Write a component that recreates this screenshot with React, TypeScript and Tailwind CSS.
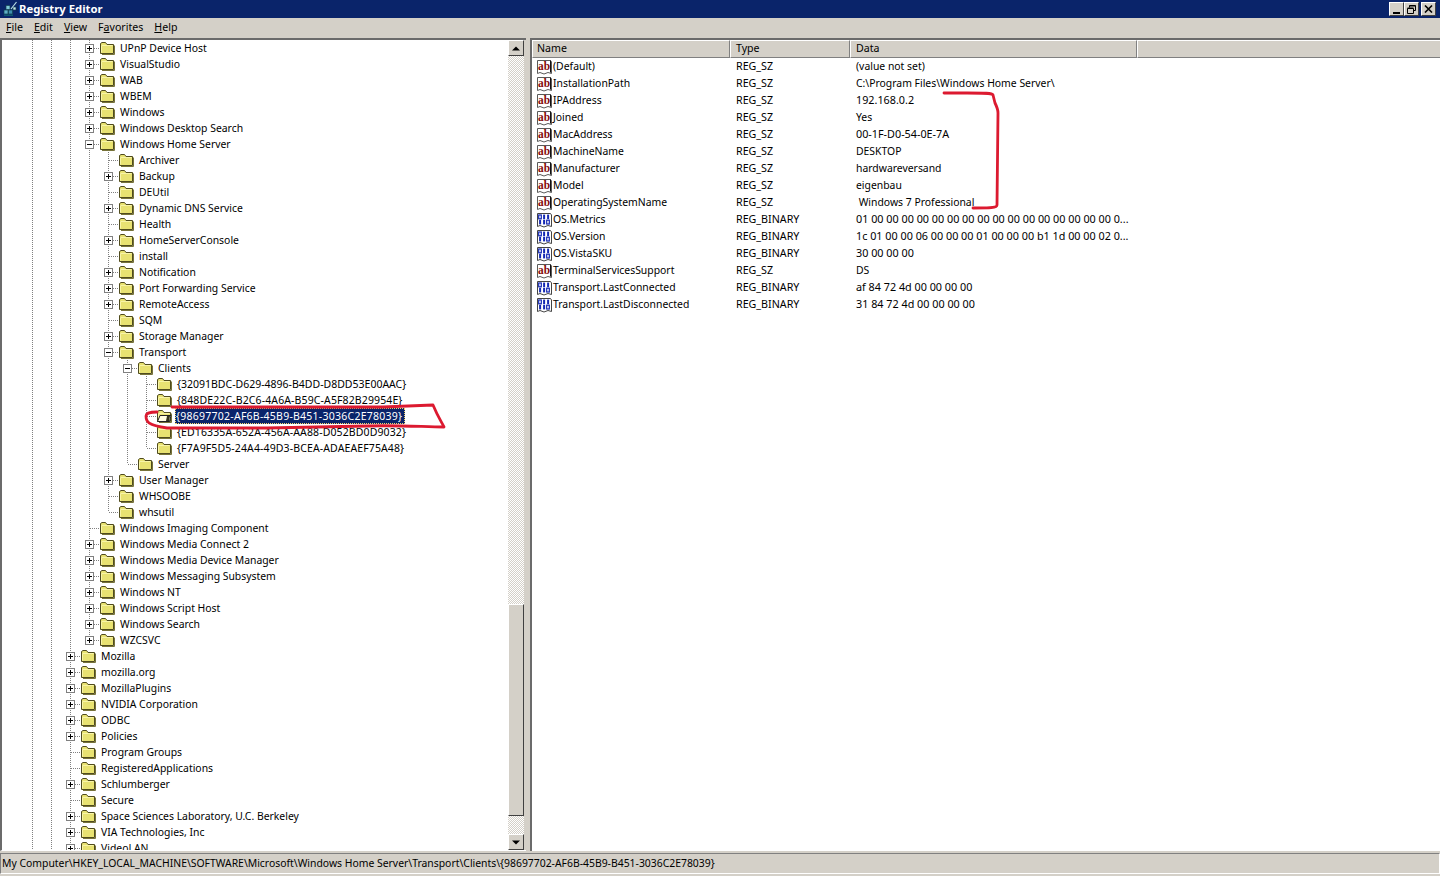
import React from "react";

type Row = [number, string, string, number?];
const rows: Row[] = [
  [4, "+", "UPnP Device Host"], [4, "+", "VisualStudio"], [4, "+", "WAB"], [4, "+", "WBEM"], [4, "+", "Windows"],
  [4, "+", "Windows Desktop Search"], [4, "-", "Windows Home Server"],
  [5, "", "Archiver"], [5, "+", "Backup"], [5, "", "DEUtil"], [5, "+", "Dynamic DNS Service"], [5, "", "Health"],
  [5, "+", "HomeServerConsole"], [5, "", "install"], [5, "+", "Notification"], [5, "+", "Port Forwarding Service"],
  [5, "+", "RemoteAccess"], [5, "", "SQM"], [5, "+", "Storage Manager"], [5, "-", "Transport"],
  [6, "-", "Clients"],
  [7, "", "{32091BDC-D629-4896-B4DD-D8DD53E00AAC}"], [7, "", "{848DE22C-B2C6-4A6A-B59C-A5F82B29954E}"],
  [7, "", "{98697702-AF6B-45B9-B451-3036C2E78039}", 2], [7, "", "{ED16335A-652A-456A-AA88-D052BD0D9032}"],
  [7, "", "{F7A9F5D5-24A4-49D3-BCEA-ADAEAEF75A48}", 1],
  [6, "", "Server", 1], [5, "+", "User Manager"], [5, "", "WHSOOBE"], [5, "", "whsutil", 1],
  [4, "", "Windows Imaging Component"], [4, "+", "Windows Media Connect 2"], [4, "+", "Windows Media Device Manager"],
  [4, "+", "Windows Messaging Subsystem"], [4, "+", "Windows NT"], [4, "+", "Windows Script Host"], [4, "+", "Windows Search"],
  [4, "+", "WZCSVC", 1],
  [3, "+", "Mozilla"], [3, "+", "mozilla.org"], [3, "+", "MozillaPlugins"], [3, "+", "NVIDIA Corporation"], [3, "+", "ODBC"],
  [3, "+", "Policies"], [3, "", "Program Groups"], [3, "", "RegisteredApplications"], [3, "+", "Schlumberger"], [3, "", "Secure"],
  [3, "+", "Space Sciences Laboratory, U.C. Berkeley"], [3, "+", "VIA Technologies, Inc"], [3, "+", "VideoLAN"],
];

const values: [string, string, string][] = [
  ["(Default)", "REG_SZ", "(value not set)"],
  ["InstallationPath", "REG_SZ", "C:\\Program Files\\Windows Home Server\\"],
  ["IPAddress", "REG_SZ", "192.168.0.2"],
  ["Joined", "REG_SZ", "Yes"],
  ["MacAddress", "REG_SZ", "00-1F-D0-54-0E-7A"],
  ["MachineName", "REG_SZ", "DESKTOP"],
  ["Manufacturer", "REG_SZ", "hardwareversand"],
  ["Model", "REG_SZ", "eigenbau"],
  ["OperatingSystemName", "REG_SZ", "\u00a0Windows 7 Professional"],
  ["OS.Metrics", "REG_BINARY", "01 00 00 00 00 00 00 00 00 00 00 00 00 00 00 00 00 0..."],
  ["OS.Version", "REG_BINARY", "1c 01 00 00 06 00 00 00 01 00 00 00 b1 1d 00 00 02 0..."],
  ["OS.VistaSKU", "REG_BINARY", "30 00 00 00"],
  ["TerminalServicesSupport", "REG_SZ", "DS"],
  ["Transport.LastConnected", "REG_BINARY", "af 84 72 4d 00 00 00 00"],
  ["Transport.LastDisconnected", "REG_BINARY", "31 84 72 4d 00 00 00 00"],
];

const dot = { stroke: "#808080", strokeWidth: 1, strokeDasharray: "1 1" };

function Guide() {
  return (
    <svg width="19" height="16" className="shrink-0 block">
      <line x1="9.5" y1="0" x2="9.5" y2="16" {...dot} />
    </svg>
  );
}

function Node({ exp, last }: { exp: string; last: boolean }) {
  return (
    <svg width="19" height="16" className="shrink-0 block">
      <line x1="9.5" y1="0" x2="9.5" y2={last ? 8 : 16} {...dot} />
      <line x1="10" y1="8.5" x2="19" y2="8.5" {...dot} />
      {exp && (
        <>
          <rect x="5.5" y="4.5" width="8" height="8" fill="#fff" stroke="#808080" />
          <line x1="7" y1="8.5" x2="12" y2="8.5" stroke="#000" />
          {exp === "+" && <line x1="9.5" y1="6" x2="9.5" y2="11" stroke="#000" />}
        </>
      )}
    </svg>
  );
}

function Folder({ open }: { open?: boolean }) {
  return (
    <svg width="16" height="16" className="shrink-0 block">
      <path d="M1.5 13.5V3.5L3 2.5H6.5L8 4.5H14.5V13.5Z" fill="#e8e272" stroke="#4f4b1e" />
      <path d="M2.5 5.5H13.5" stroke="#f8f4a8" />
      <path d="M2.5 6V12.5" stroke="#f8f4a8" />
      <path d="M15.5 5.5V14.5H3" stroke="#77733a" fill="none" />
      {open && <path d="M1.5 13.5L4 7.5H15L13.5 13.5Z" fill="#fffce0" stroke="#222" />}
      {open && <path d="M11 8L14 8L13 13L10 13Z" fill="#33331a" />}
    </svg>
  );
}

function AbIcon() {
  return (
    <svg width="17" height="16" className="shrink-0 block">
      <path d="M1.5 1.5H14.5L15.5 3V14.5L12 13.5L8 15L4 13.5L1.5 14.5Z" fill="#fff" stroke="#5a5a5a" />
      <path d="M14.5 1.5V13.5" stroke="#111" />
      <text x="2" y="10.5" fontFamily="'Liberation Serif', serif" fontWeight="700" fontSize="12.5" textLength="12" lengthAdjust="spacingAndGlyphs" fill="#860b0b">ab</text>
    </svg>
  );
}

function BinIcon() {
  const bits = ["011", "110"];
  return (
    <svg width="17" height="16" className="shrink-0 block">
      <path d="M1.5 1.5H14.5L15.5 3V14.5L12 13.5L8 15L4 13.5L1.5 14.5Z" fill="#fff" stroke="#444" />
      {bits.map((b, r) =>
        [...b].map((c, i) => {
          const x = 2.5 + i * 4;
          const y = 2.6 + r * 5.2;
          return c === "1" ? (
            <rect key={`${r}${i}`} x={x + 0.6} y={y} width="2" height="4.6" fill="#1428b4" />
          ) : (
            <rect key={`${r}${i}`} x={x + 0.2} y={y + 0.4} width="2.6" height="3.8" fill="none" stroke="#1428b4" strokeWidth="1.2" />
          );
        })
      )}
    </svg>
  );
}

function AppIcon() {
  return (
    <svg width="16" height="16" className="block">
      <rect x="2" y="9" width="4" height="4" fill="#5fb0c8" stroke="#12404f" strokeWidth="0.7" />
      <rect x="6.5" y="9" width="4" height="4" fill="#3e8fb0" stroke="#12404f" strokeWidth="0.7" />
      <rect x="4" y="4.5" width="4" height="4" fill="#7fc8d8" stroke="#12404f" strokeWidth="0.7" />
      <rect x="11" y="6" width="3" height="3" fill="#c8e4ea" stroke="#12404f" strokeWidth="0.7" />
      <path d="M9 8L14.5 1" stroke="#b8dce4" strokeWidth="1.2" />
      <rect x="2" y="13.5" width="9" height="1.5" fill="#0e5a6e" />
    </svg>
  );
}

function TreeRow({ row }: { row: Row }) {
  const [level, exp, label, flag] = row;
  const cells: React.ReactNode[] = [];
  for (let i = 0; i < level; i++) {
    cells.push(i === 0 ? <div key={i} className="w-[19px] shrink-0" /> : <Guide key={i} />);
  }
  const selected = flag === 2;
  const isGuid = label.startsWith("{");
  const size = isGuid ? (label.startsWith("{32") ? "text-[10.5px]" : "text-[10.5px] tracking-[0.12px]") : "text-[10.4px]";
  return (
    <div className="flex items-center h-4 pl-[2px] whitespace-nowrap">
      {cells}
      <Node exp={exp} last={flag === 1} />
      <Folder open={selected} />
      <span
        className={
          selected
            ? "text-[10.5px] tracking-[0.25px] ml-[3px] pl-px pr-[3px] h-4 leading-4 bg-[#0a246a] text-white outline-1 outline-dotted outline-[#f5d36a] -outline-offset-1"
            : `${size} ml-[4px] px-px h-4 leading-4`
        }
      >
        {label}
      </span>
    </div>
  );
}

function U({ children }: { children: React.ReactNode }) {
  return <span className="underline underline-offset-1">{children}</span>;
}

function WinButton({ children }: { children: React.ReactNode }) {
  return (
    <div className="w-[15px] h-[14px] bg-[#d4d0c8] border border-t-white border-l-white border-r-[#404040] border-b-[#404040] flex items-center justify-center">
      {children}
    </div>
  );
}

function Arrow({ up }: { up?: boolean }) {
  return (
    <div className="w-4 h-4 shrink-0 bg-[#d4d0c8] border border-t-white border-l-white border-r-[#404040] border-b-[#404040] flex items-center justify-center">
      <svg width="8" height="5">
        <path d={up ? "M4 0.5L8 4.5H0Z" : "M0 0.5H8L4 4.5Z"} fill="#000" />
      </svg>
    </div>
  );
}

const track = "bg-[repeating-conic-gradient(#d4d0c8_0_25%,#ffffff_0_50%)] bg-[length:2px_2px]";

function HeaderCell({ w, label, pl }: { w: string; label: string; pl: string }) {
  return (
    <div className={`${w} ${pl} h-full bg-[#d4d0c8] border-t border-t-white border-l border-l-white border-r border-r-[#808080] border-b border-b-[#808080] leading-[15px] shrink-0 text-[10.6px]`}>
      {label}
    </div>
  );
}

export default function App() {
  return (
    <div className="relative w-[1440px] h-[876px] overflow-hidden flex flex-col bg-[#d4d0c8] text-black text-[10.4px] font-['Noto_Sans',sans-serif]">
      <div className="h-[18px] shrink-0 bg-[#0a246a] flex items-center pl-[2px] pr-[4px]">
        <AppIcon />
        <span className="ml-px text-white font-bold text-[11.3px]">Registry Editor</span>
        <div className="ml-auto flex items-center">
          <WinButton>
            <div className="w-[7px] h-[2px] bg-black mt-[7px] mr-[1px]" />
          </WinButton>
          <WinButton>
            <svg width="9" height="9" className="block">
              <path d="M2.5 2.5V0.5H8.5V5.5H6.5M0.5 3.5H6.5V8.5H0.5Z M0.5 3H6.5 M2.5 1H8.5" fill="none" stroke="#000" />
            </svg>
          </WinButton>
          <div className="ml-[2px]">
            <WinButton>
              <svg width="9" height="8" className="block">
                <path d="M1 0.5L8 7.5M8 0.5L1 7.5" stroke="#000" strokeWidth="1.6" />
              </svg>
            </WinButton>
          </div>
        </div>
      </div>

      <div className="h-5 shrink-0 flex items-center pl-[6px] gap-[11px] text-[10.6px]">
        <span><U>F</U>ile</span>
        <span><U>E</U>dit</span>
        <span><U>V</U>iew</span>
        <span>F<U>a</U>vorites</span>
        <span><U>H</U>elp</span>
      </div>

      <div className="h-[814px] shrink-0 flex">
        <div className="w-[526px] shrink-0 h-[813px] flex border-t-2 border-l-2 border-t-[#6b6b6b] border-l-[#6b6b6b] border-b border-b-white bg-white">
          <div className="w-[506px] overflow-hidden h-full">
            {rows.map((r, i) => (
              <TreeRow key={i} row={r} />
            ))}
          </div>
          <div className="w-4 h-full flex flex-col shrink-0">
            <Arrow up />
            <div className={`h-[548px] shrink-0 ${track}`} />
            <div className="h-[212px] shrink-0 bg-[#d4d0c8] border border-t-white border-l-white border-r-[#404040] border-b-[#404040]" />
            <div className={`flex-1 ${track}`} />
            <Arrow />
          </div>
          <div className="w-[2px] h-full bg-[#d4d0c8]" />
        </div>
        <div className="w-[4px] shrink-0" />
        <div className="flex-1 h-[813px] border-t-2 border-l-2 border-t-[#6b6b6b] border-l-[#6b6b6b] bg-white overflow-hidden">
          <div className="h-[18px] flex">
            <HeaderCell w="w-[198px]" pl="pl-[4px]" label="Name" />
            <HeaderCell w="w-[120px]" pl="pl-[5px]" label="Type" />
            <HeaderCell w="w-[287px]" pl="pl-[5px]" label="Data" />
            <div className="flex-1 bg-[#d4d0c8] border-t border-t-white border-l border-l-white border-b border-b-[#808080]" />
          </div>
          {values.map(([n, t, d], i) => (
            <div key={i} className="h-[17px] flex items-center whitespace-nowrap">
              <div className="w-[198px] shrink-0 pl-[4px] flex items-center">
                {t === "REG_SZ" ? <AbIcon /> : <BinIcon />}
                <span>{n}</span>
              </div>
              <div className="w-[120px] shrink-0 pl-[6px] text-[10.7px]">{t}</div>
              <div className={/^[0-9a-fA-F .\-]+$/.test(d) ? "pl-[6px] text-[10.8px]" : "pl-[6px]"}>{d}</div>
            </div>
          ))}
        </div>
      </div>

      <div className="h-[21px] shrink-0 mt-px border border-t-[#808080] border-l-[#808080] border-r-white border-b-white leading-[18px] pl-px whitespace-nowrap">
        {"My Computer\\HKEY_LOCAL_MACHINE\\SOFTWARE\\Microsoft\\Windows Home Server\\Transport\\Clients\\{98697702-AF6B-45B9-B451-3036C2E78039}"}
      </div>

      <svg className="absolute inset-0 pointer-events-none" width="1440" height="876" fill="none">
        <path
          d="M157 412C150 412 146 413 146 416C146 422 148 425 167 428L267 428L367 426C400 425 425 427 444 427C441 421 438 417 433 405L383 407L300 407L172 407"
          stroke="#dc1a30"
          strokeWidth="2.8"
          strokeLinecap="round"
          strokeLinejoin="round"
        />
        <path
          d="M944 93L967 93C985 93 992 93 993 95L995 103C997 107 998 110 998 113L997 205C997 208 990 208 973 208"
          stroke="#dc1a30"
          strokeWidth="2.8"
          strokeLinecap="round"
          strokeLinejoin="round"
        />
      </svg>
    </div>
  );
}
